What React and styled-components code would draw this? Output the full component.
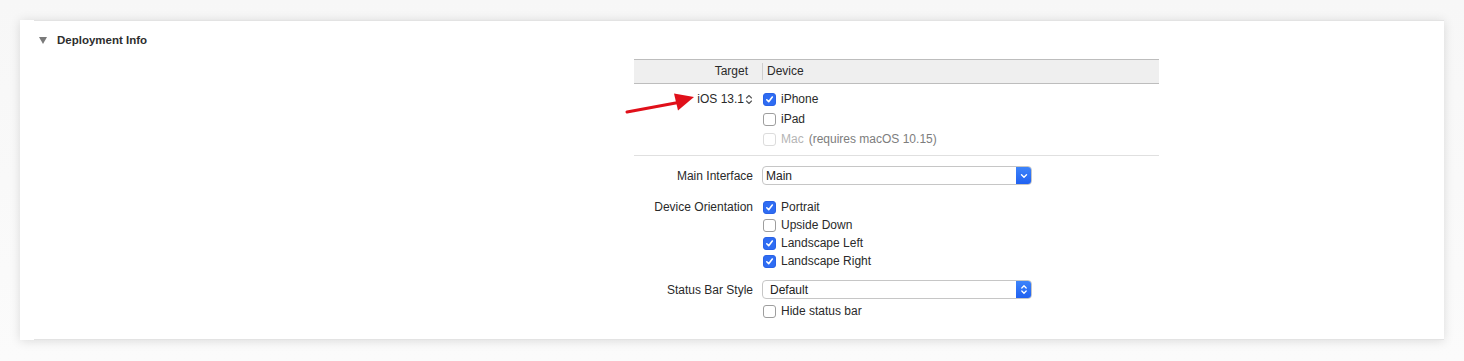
import React from "react";
import styled, { createGlobalStyle } from "styled-components";

const Global = createGlobalStyle`
  html, body { margin: 0; padding: 0; background: #ffffff; }
  body { font-family: "Liberation Sans", Arial, sans-serif; color: #262626; }
`;

const Page = styled.div`
  width: 1464px;
  height: 361px;
  padding: 20px 20px 21px 20px;
  box-sizing: border-box;
  background: linear-gradient(#f7f7f7, #fbfbfb);
`;

const Panel = styled.div`
  position: relative;
  height: 320px;
  background: #fff;
  box-shadow: 0 1px 10px rgba(0, 0, 0, 0.13);
  padding-left: 14px;
  box-sizing: border-box;
`;

const Inner = styled.div`
  height: 320px;
  box-sizing: border-box;
  border-top: 1px solid #e3e3e3;
  border-bottom: 1px solid #e3e3e3;
  display: flex;
  flex-direction: column;
`;

const TitleRow = styled.div`
  height: 38px;
  display: flex;
  align-items: center;
  padding-left: 5px;
  gap: 10px;
  font-size: 11.5px;
  font-weight: bold;
  color: #2e2e2e;
`;

const Triangle = styled.span`
  width: 0;
  height: 0;
  border-left: 4px solid transparent;
  border-right: 4px solid transparent;
  border-top: 7px solid #7a7a7a;
  margin-top: 1px;
`;

const Content = styled.div`
  margin-left: 600px;
  width: 525px;
  display: flex;
  flex-direction: column;
  font-size: 12px;
`;

const TableHead = styled.div`
  height: 25px;
  box-sizing: border-box;
  border-top: 1px solid #bdbdbd;
  border-bottom: 1px solid #bdbdbd;
  background: #efefef;
  display: flex;
  align-items: center;
`;

const HeadCell = styled.div`
  width: ${(p) => p.$w || "auto"};
  box-sizing: border-box;
  text-align: ${(p) => p.$align || "left"};
  padding: ${(p) => p.$pad || "0"};
  color: #2a2a2a;
  height: 17px;
  line-height: 17px;
  border-left: ${(p) => (p.$divider ? "1px solid #cfcfcf" : "none")};
`;

const Block = styled.div`
  padding: ${(p) => p.$pad || "0"};
  border-bottom: ${(p) => (p.$sep ? "1px solid #e0e0e0" : "none")};
  display: grid;
  grid-template-columns: 128px 1fr;
`;

const Label = styled.div`
  grid-column: 1;
  height: ${(p) => p.$h || 18}px;
  display: flex;
  align-items: center;
  justify-content: flex-end;
  padding-right: 9px;
  white-space: nowrap;
  color: #2a2a2a;
`;

const Controls = styled.div`
  grid-column: 2;
  display: flex;
  flex-direction: column;
`;

const CheckRow = styled.div`
  height: ${(p) => p.$h || 18}px;
  display: flex;
  align-items: center;
  gap: 5px;
  padding-left: 1px;
  color: ${(p) => (p.$disabled ? "#b5b5b5" : "#2a2a2a")};
  white-space: nowrap;
`;

const Note = styled.span`
  color: #7d7d7d;
  margin-left: 5px;
`;

const Box = styled.span`
  width: 13px;
  height: 13px;
  box-sizing: border-box;
  border-radius: 3px;
  display: inline-flex;
  align-items: center;
  justify-content: center;
  flex: none;
  background: ${(p) => (p.$checked ? "#2e6cf3" : "#fff")};
  border: 1px solid
    ${(p) => (p.$checked ? "#2a62e6" : p.$disabled ? "#dcdcdc" : "#9e9e9e")};
`;

const Popup = styled.div`
  width: 270px;
  height: 19px;
  box-sizing: border-box;
  border: 1px solid #c6c6c6;
  border-radius: 4px;
  display: flex;
  align-items: center;
  overflow: hidden;
  background: #fff;
`;

const PopupText = styled.span`
  flex: 1;
  padding-left: ${(p) => p.$pl || 3}px;
  color: #222;
`;

const PopupButton = styled.span`
  width: 16px;
  height: 19px;
  margin: -1px -1px -1px 0;
  background: linear-gradient(#3f86fb, #1f5ff0);
  display: flex;
  align-items: center;
  justify-content: center;
  border-radius: 0 4px 4px 0;
`;

const Version = styled.span`
  display: inline-flex;
  align-items: center;
  gap: 1px;
`;

const Spacer = styled.div`
  height: ${(p) => p.$h}px;
`;

const Arrow = styled.svg`
  position: absolute;
  left: 605px;
  top: 72px;
`;

const Check = () => (
  <svg width="9" height="9" viewBox="0 0 9 9">
    <path d="M1.8 4.8 L3.7 6.7 L7.3 2" fill="none" stroke="#fff" strokeWidth="1.6" strokeLinecap="round" strokeLinejoin="round" />
  </svg>
);

const CheckBox = ({ checked, disabled, children, note, h }) => (
  <CheckRow $disabled={disabled} $h={h}>
    <Box $checked={checked} $disabled={disabled}>{checked && <Check />}</Box>
    <span>
      {children}
      {note && <Note>{note}</Note>}
    </span>
  </CheckRow>
);

const Stepper = () => (
  <svg width="8" height="11" viewBox="0 0 8 11">
    <path d="M1.5 4 L4 1.5 L6.5 4 M1.5 7 L4 9.5 L6.5 7" fill="none" stroke="#555" strokeWidth="1.1" strokeLinecap="round" strokeLinejoin="round" />
  </svg>
);

const ChevronDown = () => (
  <svg width="8" height="6" viewBox="0 0 8 6">
    <path d="M1.5 1.8 L4 4.2 L6.5 1.8" fill="none" stroke="#fff" strokeWidth="1.4" strokeLinecap="round" strokeLinejoin="round" />
  </svg>
);

const ChevronUpDown = () => (
  <svg width="8" height="11" viewBox="0 0 8 11">
    <path d="M1.8 4 L4 1.8 L6.2 4 M1.8 7 L4 9.2 L6.2 7" fill="none" stroke="#fff" strokeWidth="1.3" strokeLinecap="round" strokeLinejoin="round" />
  </svg>
);

export default function App() {
  return (
    <>
      <Global />
      <Page>
        <Panel>
          <Inner>
            <TitleRow>
              <Triangle />
              Deployment Info
            </TitleRow>
            <Content>
              <TableHead>
                <HeadCell $w="128px" $align="right" $pad="0 14px 0 0">Target</HeadCell>
                <HeadCell $divider $pad="0 0 0 4px">Device</HeadCell>
              </TableHead>
              <Block $pad="5px 0 6px 0" $sep>
                <Label $h={20}>
                  <Version>
                    iOS 13.1
                    <Stepper />
                  </Version>
                </Label>
                <Controls>
                  <CheckBox checked h={20}>iPhone</CheckBox>
                  <CheckBox h={20}>iPad</CheckBox>
                  <CheckBox disabled h={20} note="(requires macOS 10.15)">Mac</CheckBox>
                </Controls>
              </Block>
              <Block $pad="10px 0 0 0">
                <Label $h={19}>Main Interface</Label>
                <Controls>
                  <Popup>
                    <PopupText>Main</PopupText>
                    <PopupButton><ChevronDown /></PopupButton>
                  </Popup>
                </Controls>
              </Block>
              <Block $pad="13px 0 0 0">
                <Label>Device Orientation</Label>
                <Controls>
                  <CheckBox checked>Portrait</CheckBox>
                  <CheckBox>Upside Down</CheckBox>
                  <CheckBox checked>Landscape Left</CheckBox>
                  <CheckBox checked>Landscape Right</CheckBox>
                </Controls>
              </Block>
              <Block $pad="10px 0 0 0">
                <Label $h={19}>Status Bar Style</Label>
                <Controls>
                  <Popup>
                    <PopupText $pl={7}>Default</PopupText>
                    <PopupButton><ChevronUpDown /></PopupButton>
                  </Popup>
                  <Spacer $h={3} />
                  <CheckBox>Hide status bar</CheckBox>
                </Controls>
              </Block>
            </Content>
          </Inner>
          <Arrow width="80" height="26" viewBox="0 0 80 26">
            <path d="M2 20 L56 10" stroke="#e0101a" strokeWidth="3" strokeLinecap="round" />
            <polygon points="69,5 49,1.5 53,18.5" fill="#e0101a" />
          </Arrow>
        </Panel>
      </Page>
    </>
  );
}
